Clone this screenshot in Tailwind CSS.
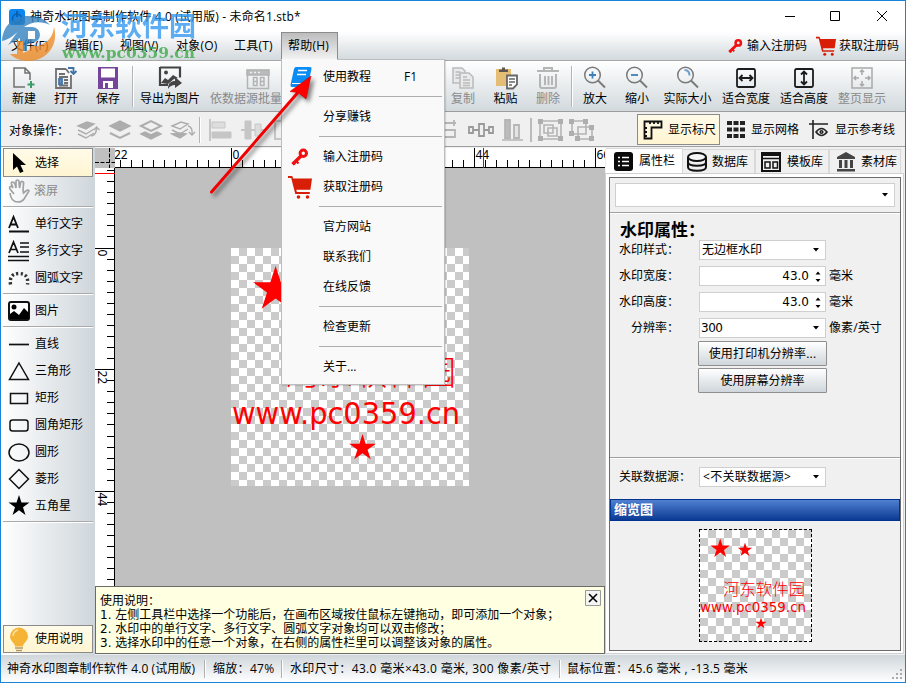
<!DOCTYPE html>
<html lang="zh-CN">
<head>
    <meta charset="UTF-8">
    <meta name="viewport" content="width=device-width, initial-scale=1.0">
    <title>神奇水印图章制作软件 4.0 (试用版)</title>
    <script src="https://cdn.jsdelivr.net/npm/@tailwindcss/browser@4"></script>
</head>
<body class="overflow-hidden">
    <!-- shared symbols -->
    <svg class="hidden">
        <symbol id="star" viewBox="-10 -10 20 20"><path d="M0-10 2.25-3.09H9.51L3.63 1.18 5.88 8.09 0 3.82-5.88 8.09-3.63 1.18-9.51-3.09H-2.25Z"/></symbol>
        <symbol id="key" viewBox="0 0 18 18"><g fill="none" stroke="#f01010"><circle cx="12.300" cy="5.300" r="3.200" stroke-width="3"/><path d="M10 8 1.500 16.200" stroke-width="3.400"/><path d="m4.500 12.500 3 3M2 14.500l2 2" stroke-width="2.400"/></g></symbol>
        <symbol id="cart" viewBox="0 0 24 24"><path d="M0 1h4.200l1 2.500H24l-1.600 11.300H8.300l.5 2.200h13v2H7.300L3.200 3H0Z" fill="#d81e06"/><circle cx="10.500" cy="22" r="1.800" fill="#d81e06"/><circle cx="19.500" cy="22" r="1.800" fill="#d81e06"/></symbol>
        <symbol id="down" viewBox="0 0 6 4"><path d="M0 0h6L3 3.500Z"/></symbol>
        <symbol id="lens" viewBox="0 0 24 24"><circle cx="9.500" cy="9" r="7.800" fill="none" stroke="#7a7a7a" stroke-width="1.500"/><path d="m15 14.500 7 7" stroke="#7a7a7a" stroke-width="2"/></symbol>
    </svg>

    <div class="relative w-[906px] h-[683px] border border-[#1883d7] bg-[#f0f0f0] flex flex-col text-[12px] leading-[14px] text-black whitespace-nowrap font-['Open_Sans','Noto_Sans_CJK_SC',sans-serif]">
        <!-- title bar -->
        <div class="h-[31px] shrink-0 bg-white flex items-center pl-[8px]">
            <svg class="w-4 h-4" viewBox="0 0 16 16"><rect width="16" height="16" rx="3" fill="#0d87ee"/><circle cx="8" cy="9.500" r="4.500" fill="none" stroke="#0a5fae" stroke-width="1.600"/><path d="M8 2v6" stroke="#0a5fae" stroke-width="2"/></svg>
            <span class="ml-[5px] tracking-[0.14px]">神奇水印图章制作软件 4.0 (试用版) - 未命名1.stb*</span>
            <svg class="ml-auto mr-[17px] w-[104px] h-[12px] mb-[2px]" viewBox="0 0 104 12" fill="none" stroke="#000"><path d="M1 6.500h10M46.500 1.500h9v9h-9ZM93 1l10 10M103 1 93 11"/></svg>
        </div>

        <!-- menu bar -->
        <div class="h-[29px] shrink-0 border-b border-[#a8a8a8] bg-linear-to-b from-white to-[#d2d9dd] flex items-center">
            <span class="w-[54px] pl-[10px]">文件(F)</span>
            <span class="w-[55px] pl-[10px]">编辑(E)</span>
            <span class="w-[56px] pl-[10px]">视图(V)</span>
            <span class="w-[58px] pl-[10px] tracking-[0.2px]">对象(O)</span>
            <span class="w-[57px] pl-[10px] tracking-[0.2px]">工具(T)</span>
            <span class="w-[57px] h-full border border-b-0 border-[#8c8c8c] bg-linear-to-b from-[#bdbdbd] to-[#f4f4f4] pl-[6px] leading-[26px] tracking-[0.2px]">帮助(H)</span>
            <div class="ml-auto flex items-center mr-[6px]">
                <svg class="w-[15px] h-[16px] mr-[4px]"><use href="#key"/></svg>输入注册码
                <svg class="w-[20px] h-[20px] ml-[9px] mr-[3px]"><use href="#cart"/></svg>获取注册码
            </div>
        </div>

        <!-- main toolbar -->
        <div class="h-[51px] shrink-0 border-b border-[#9d9d9d] bg-linear-to-b from-white to-[#d2d9dd] flex pt-[5px] pl-[2px]">
            <div class="w-[42px] shrink-0 flex flex-col items-center gap-[2px]">
                <svg class="w-6 h-6" viewBox="0 0 24 24" fill="none" stroke="#707070" stroke-width="1.500"><path d="M13 21H2V2h11l5 5v7M13 2v5h5"/><path d="M19 15v7M15.500 18.500h7" stroke="#3d9b6a" stroke-width="2"/></svg>新建
            </div>
            <div class="w-[42px] shrink-0 flex flex-col items-center gap-[2px]">
                <svg class="w-6 h-6" viewBox="0 0 24 24" fill="none" stroke="#707070" stroke-width="1.800"><path d="M12 3H2v19h15V9M12 3l3 4"/><path d="M5 8h6M5 11h9M10 14h4M10 17h4M5 19.500h9"/><path d="M5 13h3v5H5Z" fill="#6f8fb0" stroke="#4678ab"/><path d="M14 2h5.500v5M16.500 5l3 3 3-3" stroke="#3f74a8"/></svg>打开
            </div>
            <div class="w-[42px] shrink-0 flex flex-col items-center gap-[2px]">
                <svg class="w-6 h-6" viewBox="0 0 24 24"><path d="M2 1h20v22H2Z" fill="#75459b"/><path d="M5 2.500h14v9H5ZM7 15h10v7H7Z" fill="#fff"/><path d="M9 17h3v5H9Z" fill="#75459b"/></svg>保存
            </div>
            <div class="w-[2px] shrink-0 h-[41px] mx-[3px] bg-[#b4b4b4] border-r border-white"></div>
            <div class="w-[64px] shrink-0 ml-px flex flex-col items-center gap-[2px]">
                <svg class="w-6 h-6" viewBox="0 0 24 24"><path d="M2 1.500h20v10M2 1v18h8" fill="none" stroke="#444" stroke-width="2.200"/><circle cx="8" cy="6.500" r="2" fill="#444"/><path d="m3 17 4-5 3 2 5-5 5 3-4 1-6 5Z" fill="#444"/><path d="M10 23c0-6 3-8 7-8v-4l7 6-7 5v-3c-3 0-5 1-7 4Z" fill="#444"/></svg>导出为图片
            </div>
            <div class="w-[112px] shrink-0 flex flex-col items-center gap-[2px] text-[#8a8a8a]">
                <svg class="w-6 h-6" viewBox="0 0 24 24" fill="none" stroke="#b3b3b3" stroke-width="1.500"><path d="M1.500 4.500h21v18h-21Z"/><path d="M1 4h22v5H1Z" fill="#bbb"/><path d="M4 6.500h2m2 0h2m2 0h2" stroke="#eee"/><path d="M7.500 11.500h3.500v8H7.500Zm0 4H11M14.500 11.500H18v8h-3.500Zm0 4H18"/></svg>依数据源批量导出
            </div>
            <div class="w-[128px] shrink-0"></div>
            <div class="w-[42px] shrink-0 flex flex-col items-center gap-[2px] text-[#8a8a8a]">
                <svg class="w-6 h-6" viewBox="0 0 24 24" fill="#e8eaeb" stroke="#bbb" stroke-width="1.500"><path d="M2 2h9l3 3v12H2Z"/><path d="M4.500 6h5M4.500 9h5M4.500 12h5"/><path d="M9 7h9l4 4v11H9Z"/><path d="M12 11h4M12 14h7M12 17h7M12 19.500h7"/></svg>复制
            </div>
            <div class="w-[43px] shrink-0 flex flex-col items-center gap-[2px]">
                <svg class="w-6 h-6" viewBox="0 0 24 24"><path d="M2 3h15v17H2Z" fill="#e5bd75"/><path d="M5 6V3.500h3V1.500h3v2h3V6Z" fill="#5c5550"/><path d="M13 9.500h10v9l-4 4h-6Z" fill="#fff" stroke="#666" stroke-width="1.800"/><path d="M15 13h6M15 16h6M15 19h3" stroke="#666" stroke-width="1.400"/></svg>粘贴
            </div>
            <div class="w-[42px] shrink-0 flex flex-col items-center gap-[2px] text-[#8a8a8a]">
                <svg class="w-6 h-6" viewBox="0 0 24 24" fill="none" stroke="#b5b5b5" stroke-width="2"><path d="M1 5h22M8 5V2h8v3M4 8v12q0 2 2 2h12q2 0 2-2V8M9 10v9M12.500 10v9M16 10v9"/></svg>删除
            </div>
            <div class="w-[2px] shrink-0 h-[41px] ml-[2px] mr-px bg-[#b4b4b4] border-r border-white"></div>
            <div class="w-[42px] shrink-0 flex flex-col items-center gap-[2px]">
                <svg class="w-6 h-6" viewBox="0 0 24 24"><use href="#lens"/><path d="M6 9h7M9.500 5.500v7" stroke="#3f7fb8" stroke-width="1.800"/></svg>放大
            </div>
            <div class="w-[42px] shrink-0 flex flex-col items-center gap-[2px]">
                <svg class="w-6 h-6" viewBox="0 0 24 24"><use href="#lens"/><path d="M6 9h7" stroke="#3f7fb8" stroke-width="1.800"/></svg>缩小
            </div>
            <div class="w-[59px] shrink-0 flex flex-col items-center gap-[2px]">
                <svg class="w-6 h-6" viewBox="0 0 24 24"><use href="#lens"/><path d="M8.500 4q5 .3 5 5.500" fill="none" stroke="#6ba0cc" stroke-width="2"/></svg>实际大小
            </div>
            <div class="w-[58px] shrink-0 flex flex-col items-center gap-[2px]">
                <svg class="w-6 h-6" viewBox="0 0 24 24" fill="none" stroke="#1c1c1c" stroke-width="1.800"><rect x="3" y="3" width="18" height="18" rx="1.500"/><path d="M6 12h12M8.500 9l-3 3 3 3M15.500 9l3 3-3 3"/></svg>适合宽度
            </div>
            <div class="w-[58px] shrink-0 flex flex-col items-center gap-[2px]">
                <svg class="w-6 h-6" viewBox="0 0 24 24" fill="none" stroke="#1c1c1c" stroke-width="1.800"><rect x="3" y="3" width="18" height="18" rx="1.500"/><path d="M12 6v12M9 8.500l3-3 3 3M9 15.500l3 3 3-3"/></svg>适合高度
            </div>
            <div class="w-[58px] shrink-0 flex flex-col items-center gap-[2px] text-[#8a8a8a]">
                <svg class="w-6 h-6" viewBox="0 0 24 24" fill="none" stroke="#a9a9a9" stroke-width="1.500"><path d="M2 2h20v20H2Z"/><path d="M12 4v5M12 15v5M4 12h5M15 12h5M10 6l2-2 2 2M10 18l2 2 2-2M6 10l-2 2 2 2M18 10l2 2-2 2"/></svg>整页显示
            </div>
        </div>

        <!-- object toolbar -->
        <div class="h-[35px] shrink-0 border-b border-[#a0a0a0] flex items-center pl-[8px] pt-[2px]">
            <span class="w-[67px] pt-[2px]">对象操作：</span>
            <svg class="w-[121px] h-6" viewBox="0 0 121 24" fill="#adadad" stroke="#adadad" stroke-width="1.400">
                <path d="m2 8 9-4 7 2-8 5Z"/><path d="m2 12 8 4 8-5M2 16l8 4 8-5" fill="none"/><path d="M15 18q6-1 5.500-9M18 12l2.500-3 3 3" fill="none"/>
                <path d="m34 8 10-5 10 5-10 5Z"/><path d="m34 15 10 5 10-5" fill="none" stroke-width="2"/>
                <path d="m65 8 10-5 10 5-10 5Z" fill="none" stroke-width="2"/><path d="m65 16 4-2 6 3 6-3 4 2-10 5Z"/>
                <path d="m96 8 9-4 7 2-8 5Z" fill="none"/><path d="m96 12 8 4 8-5" fill="none"/><path d="m96 16 8 4 6-4-7-1Z"/><path d="M112 8q5 1 4 9m-3-3 3 3 3-3" fill="none"/>
            </svg>
            <div class="w-[2px] h-[26px] ml-[2px] bg-[#b4b4b4] border-r border-white"></div>
            <svg class="w-[90px] h-6 ml-[8px]" viewBox="0 0 90 24" fill="#c6c6c6" stroke="#c6c6c6"><path d="M1 1v22" stroke-width="2"/><path d="M3 4h13v6H3Z" fill="#ddd"/><path d="M3 14h19v6H3Z"/><path d="M32 12h23" stroke-width="2"/><path d="M36 3h6v18h-6Z"/><path d="M46 6h6v12h-6Z" fill="#ddd"/><path d="M66 3h20v18H66Z" fill="none" stroke-width="2"/></svg>
            <div class="w-[128px]"></div>
            <svg class="w-[95px] h-6 ml-[8px]" viewBox="0 0 95 24" fill="none" stroke="#b5b5b5" stroke-width="1.800"><path d="M3 5h18M19 2v6M3 12h17v7H3Z"/><g stroke="#9a9a9a"><path d="M34 9h4v6h-4ZM44 6h5v12h-5ZM54 9h4v6h-4ZM38 12h6M49 12h5"/></g><path d="M67 22h21" stroke-width="1.500"/><path d="M70 2h5v18h-5Z" fill="#bbb"/><path d="M79 7h5v13h-5Z" fill="#e4e4e4"/></svg>
            <svg class="w-[64px] h-6 ml-0" viewBox="0 0 64 24"><path d="M1 0v24" stroke="#aaa" stroke-width="1.500"/><g fill="none" stroke="#b4b4b4" stroke-width="1.600"><path d="M10 3h21v18H10ZM14 7h9v8h-9ZM18 10h9v8h-9Z"/><path d="M42 3h14v13H42ZM48 9h14v12H48Z"/></g><g fill="#aeaeae"><path d="M8 1h5v5H8zM28 1h5v5h-5zM8 18h5v5H8zM28 18h5v5h-5zM39 1h5v5h-5zM53 1h5v5h-5zM39 13h5v5h-5zM45 18h5v5h-5zM59 18h5v5h-5zM59 7h5v5h-5z"/></g></svg>
            <div class="ml-auto w-[83px] h-[31px] mt-[-1px] border border-[#8b8b8b] bg-linear-to-b from-[#fffbe9] to-[#fff5d2] flex items-center pl-[5px]">
                <svg class="w-[20px] h-[20px] mr-[5px]" viewBox="0 0 20 20" fill="none" stroke="#111" stroke-width="1.800"><path d="M1.500 1.500h17v6h-10v11h-7ZM7 1v3M11 1v3M15 1v3M1 8h3M1 12h3M1 16h3"/></svg>显示标尺
            </div>
            <svg class="w-[18px] h-[18px] ml-[7px] mr-[6px]" viewBox="0 0 18 18"><path d="M0 0h5v4H0zM6.500 0h5v4h-5zM13 0h5v4h-5zM0 6.500h5v4H0zM6.500 6.500h5v4h-5zM13 6.500h5v4h-5zM0 13h5v4H0zM6.500 13h5v4h-5zM13 13h5v4h-5z" fill="#222"/></svg>显示网格
            <svg class="w-[20px] h-[20px] ml-[10px] mr-[6px]" viewBox="0 0 20 20" fill="none" stroke="#222" stroke-width="1.600"><path d="M0 4h19M4 0v19M7 12q5.500-7 11 0-5.500 7-11 0Z"/><circle cx="12.500" cy="12" r="1.300"/></svg><span class="mr-[10px]">显示参考线</span>
        </div>

        <div class="h-[508px] shrink-0 flex">
            <!-- tool palette -->
            <div class="w-[94px] pl-[2px] pt-[1px] flex flex-col bg-linear-to-r from-white to-[#cfd6db]">
                <div class="w-[90px] h-[29px] border border-[#8b8b8b] bg-linear-to-b from-[#fffbe9] to-[#fff5d2] flex items-center pl-[4px] gap-[5px]">
                    <svg class="w-[22px] h-[22px]" viewBox="0 0 22 22"><path d="M5 1v17l4-3.500 3 6.500 3.500-1.500-3-6.500H18Z"/></svg>选择
                </div>
                <div class="h-[27px] flex items-center pl-[5px] gap-[4px] text-[#8a8a8a]">
                    <svg class="w-[22px] h-[24px]" viewBox="0 0 22 24" fill="none" stroke="#a2a2a2" stroke-width="1.700"><path d="M6 15 2 10q-1-2 .5-2.500T5 9L3.500 5Q3 3 4.500 3T7 5l1 4V3q0-2 1.500-2T11 3l.5 6 1-5q.500-2 2-1.500T15.500 5L15 11l.5 3 3-2.500q2-1 2.500.5l-5 8q-2 3-6 3-7 0-8-9"/></svg>滚屏
                </div>
                <div class="h-[6px] pt-[2px]"><div class="h-[2px] w-[90px] bg-[#a9a9a9] border-b border-white"></div></div>
                <div class="h-[27px] flex items-center pl-[5px] gap-[5px]">
                    <svg class="w-[22px] h-[22px]" viewBox="0 0 22 22" fill="none" stroke="#111" stroke-width="1.800"><path d="M1 15 5.500 4 10 15M2.500 11.500h6M1 18.500h20"/></svg>单行文字
                </div>
                <div class="h-[27px] flex items-center pl-[5px] gap-[5px]">
                    <svg class="w-[22px] h-[22px]" viewBox="0 0 22 22" fill="none" stroke="#111" stroke-width="1.700"><path d="M1 13 5.500 2 10 13M2.500 9.500h6M12 3h9M12 7h9M12 12h9M0 16.500h21M0 20.500h21"/></svg>多行文字
                </div>
                <div class="h-[27px] flex items-center pl-[5px] gap-[5px]">
                    <svg class="w-[22px] h-[22px]" viewBox="0 0 22 22" fill="none" stroke="#333" stroke-width="3.400" stroke-dasharray="2.200 2.300"><path d="M2.500 17.500Q1 6.500 11 6.500t8.500 11"/></svg>圆弧文字
                </div>
                <div class="h-[6px] pt-[2px]"><div class="h-[2px] w-[90px] bg-[#a9a9a9] border-b border-white"></div></div>
                <div class="h-[27px] flex items-center pl-[5px] gap-[5px]">
                    <svg class="w-[22px] h-[22px]" viewBox="0 0 22 22"><rect x="1" y="2" width="20" height="18" rx="2" fill="#fff" stroke="#111" stroke-width="2"/><circle cx="6" cy="7" r="2.500"/><path d="M2 19v-5l4-3 5 4 5-7 5 5v6Z"/></svg>图片
                </div>
                <div class="h-[6px] pt-[2px]"><div class="h-[2px] w-[90px] bg-[#a9a9a9] border-b border-white"></div></div>
                <div class="h-[27px] flex items-center pl-[5px] gap-[5px]">
                    <svg class="w-[22px] h-[22px]" viewBox="0 0 22 22" fill="none" stroke="#111" stroke-width="1.700"><path d="M1 11.500h20"/></svg>直线
                </div>
                <div class="h-[27px] flex items-center pl-[5px] gap-[5px]">
                    <svg class="w-[22px] h-[22px]" viewBox="0 0 22 22" fill="none" stroke="#111" stroke-width="1.500"><path d="M11 3 20.500 19.500h-19Z"/></svg>三角形
                </div>
                <div class="h-[27px] flex items-center pl-[5px] gap-[5px]">
                    <svg class="w-[22px] h-[22px]" viewBox="0 0 22 22" fill="none" stroke="#111" stroke-width="1.500"><path d="M2.500 6.500h17v10h-17Z"/></svg>矩形
                </div>
                <div class="h-[27px] flex items-center pl-[5px] gap-[5px]">
                    <svg class="w-[22px] h-[22px]" viewBox="0 0 22 22" fill="none" stroke="#111" stroke-width="1.500"><rect x="2" y="6" width="18" height="11" rx="2.500"/></svg>圆角矩形
                </div>
                <div class="h-[27px] flex items-center pl-[5px] gap-[5px]">
                    <svg class="w-[22px] h-[22px]" viewBox="0 0 22 22" fill="none" stroke="#111" stroke-width="1.500"><ellipse cx="11" cy="11.500" rx="10" ry="8.500"/></svg>圆形
                </div>
                <div class="h-[27px] flex items-center pl-[5px] gap-[5px]">
                    <svg class="w-[22px] h-[22px]" viewBox="0 0 22 22" fill="none" stroke="#111" stroke-width="1.500"><path d="m11 1.500 9.500 9.500-9.500 9.500L1.500 11Z"/></svg>菱形
                </div>
                <div class="h-[27px] flex items-center pl-[5px] gap-[5px]">
                    <svg class="w-[22px] h-[22px]"><use href="#star"/></svg>五角星
                </div>
                <div class="h-[6px] pt-[2px]"><div class="h-[2px] w-[90px] bg-[#a9a9a9] border-b border-white"></div></div>
                <div class="w-[90px] h-[28px] mt-auto mb-[2px] border border-[#8b8b8b] bg-linear-to-b from-[#fffbe9] to-[#fff5d2] flex items-center pl-[5px] gap-[6px]">
                    <svg class="w-[20px] h-[25px]" viewBox="0 0 20 25"><path d="M10 .5a9 9 0 0 0-9 9c0 5 5 6 5 10h8c0-4 5-5 5-10a9 9 0 0 0-9-9Z" fill="#f6b436"/><path d="M4 9q.5-5 5-6" fill="none" stroke="#fde2a5" stroke-width="1.500"/><path d="M6 21h8M7 23.500h6" stroke="#b49a6a" stroke-width="1.500"/></svg>使用说明
                </div>
            </div>

            <!-- rulers, canvas and hint box -->
            <div class="w-[510px] pt-[1px] flex flex-col">
                <div class="h-[20px] flex">
                    <svg class="w-[20px] h-[20px] bg-[#c0c0c0]" viewBox="0 0 20 20"><path d="M14.500 0v20M0 14.500h20" stroke="#000" stroke-dasharray="4 1.500"/></svg>
                    <svg id="rulerX" class="w-[490px] h-[20px] bg-white" viewBox="115 148 490 20"></svg>
                </div>
                <div class="h-[418px] flex">
                    <svg id="rulerY" class="w-[20px] h-[418px] bg-white" viewBox="95 168 20 418"></svg>
                    <div class="w-[490px] h-[418px] bg-[#c0c0c0] pl-[116px] pt-[80px]">
                        <div class="w-[238px] h-[238px] bg-[conic-gradient(#cbcbcb_25%,#fff_0_50%,#cbcbcb_0_75%,#fff_0)] bg-size-[16px_16px]">
                            <svg class="w-[238px] h-[238px]" viewBox="231 248 238 238" fill="#f00">
                                <use href="#star" x="252" y="266" width="47.200" height="47.200"/>
                                <use href="#star" x="348.500" y="434" width="28" height="28"/>
                                <text x="285" y="385" font-size="34" textLength="171" font-family="'Noto Sans CJK SC'" font-weight="300">河东软件园</text>
                                <text x="232" y="423.500" font-size="30.500" textLength="228" lengthAdjust="spacingAndGlyphs" font-family="'DejaVu Sans'">www.pc0359.cn</text>
                            </svg>
                        </div>
                    </div>
                </div>
                <div class="h-[68px] border border-[#6b6b6b] bg-[#ffffe1] flex justify-between pl-[4px] pt-[7px] pr-[3px]">
                    <div class="font-['DejaVu_Sans','Noto_Sans_CJK_SC',sans-serif]">
                        <p>使用说明：</p>
                        <p>1. 左侧工具栏中选择一个功能后，在画布区域按住鼠标左键拖动，即可添加一个对象；</p>
                        <p>2. 水印中的单行文字、多行文字、圆弧文字对象均可以双击修改；</p>
                        <p>3. 选择水印中的任意一个对象，在右侧的属性栏里可以调整该对象的属性。</p>
                    </div>
                    <svg class="w-[16px] h-[16px] mt-[-4px]" viewBox="0 0 16 16"><path d="M.5.5h15v15H.5Z" fill="#f4f4f4" stroke="#999"/><path d="m4 4 8 8M12 4l-8 8" stroke="#000" stroke-width="1.600"/></svg>
                </div>
            </div>

            <!-- property panel -->
            <div class="w-[299px] pt-[1px] flex flex-col">
                <div class="h-[25px] flex items-end bg-[#f0f0f0] pl-[1px]">
                    <div class="w-[76px] h-[25px] bg-white border-t border-[#d9d9d9] flex items-center pl-[8px] gap-[6px]">
                        <svg class="w-[19px] h-[19px]" viewBox="0 0 19 19"><rect width="19" height="19" rx="3" fill="#0a0a0a"/><path d="M4 5.500h2m2 0h7M4 9.500h2m2 0h7M4 13.500h2m2 0h7" stroke="#fff" stroke-width="1.700"/></svg>属性栏
                    </div>
                    <div class="w-[73px] h-[24px] border border-b-0 border-[#d9d9d9] flex items-center pt-px pl-[4px] gap-[5px]">
                        <svg class="w-[20px] h-[20px]" viewBox="0 0 20 20" fill="none" stroke="#111" stroke-width="2"><ellipse cx="10" cy="5" rx="9" ry="4" fill="#f6f6f6"/><path d="M1 5v10c0 5 18 5 18 0V5M1 10c0 5 18 5 18 0"/></svg>数据库
                    </div>
                    <div class="w-[74px] h-[24px] border border-b-0 border-[#d9d9d9] flex items-center pt-px pl-[5px] gap-[6px]">
                        <svg class="w-[20px] h-[20px]" viewBox="0 0 20 20" fill="none" stroke="#111" stroke-width="2"><path d="M1 1h18v18H1ZM1 3h18"/><path d="M1 6.500h18" stroke-width="1.500"/><path d="M4 10h5v6H4ZM12 10h4.500v6H12Z" stroke-width="1.500"/></svg>模板库
                    </div>
                    <div class="w-[72px] h-[24px] border border-b-0 border-[#d9d9d9] flex items-center pt-px pl-[6px] gap-[5px]">
                        <svg class="w-[20px] h-[20px]" viewBox="0 0 20 20" fill="#444"><path d="m10 0 9 5v2H1V5ZM3 8h3v8H3zM8.500 8h3v8h-3zM14 8h3v8h-3zM1 17h18v2.500H1z"/></svg>素材库
                    </div>
                </div>
                <div class="h-[481px] border border-[#d0d0d0] bg-white p-[3px]">
                    <div class="w-[292px] h-[474px] border border-[#6b6b6b] bg-[#f0f0f0] flex flex-col">
                        <div class="h-[34px] px-[5px] pt-[5px]">
                            <div class="h-[24px] border border-[#cfcfcf] bg-white flex items-center justify-end pr-[6px]"><svg class="w-[6px] h-[4px]"><use href="#down"/></svg></div>
                        </div>
                        <div class="h-[2px] bg-[#a0a0a0] border-b border-white"></div>
                        <div class="h-[23px] pl-[10px] pt-[7px] text-[17px] leading-[17px] font-bold">水印属性：</div>
                        <div class="h-[26px] flex items-center pl-[9px]"><span class="w-[80px]">水印样式：</span>
                            <div class="w-[127px] h-[20px] border border-[#cfcfcf] bg-white flex items-center justify-between pl-[2px] pr-[6px]">无边框水印<svg class="w-[6px] h-[4px]"><use href="#down"/></svg></div>
                        </div>
                        <div class="h-[26px] flex items-center pl-[9px]"><span class="w-[80px]">水印宽度：</span>
                            <div class="w-[127px] h-[20px] mr-[3px] border border-[#cfcfcf] bg-white flex items-center justify-end pr-[4px] gap-[6px] font-['DejaVu_Sans']">43.0<svg class="w-[6px] h-[11px]" viewBox="0 0 6 11"><path d="M.5 3.500 3 .5l2.500 3ZM.5 8 3 11l2.500-3Z"/></svg></div>毫米
                        </div>
                        <div class="h-[26px] flex items-center pl-[9px]"><span class="w-[80px]">水印高度：</span>
                            <div class="w-[127px] h-[20px] mr-[3px] border border-[#cfcfcf] bg-white flex items-center justify-end pr-[4px] gap-[6px] font-['DejaVu_Sans']">43.0<svg class="w-[6px] h-[11px]" viewBox="0 0 6 11"><path d="M.5 3.500 3 .5l2.500 3ZM.5 8 3 11l2.500-3Z"/></svg></div>毫米
                        </div>
                        <div class="h-[26px] flex items-center pl-[21px]"><span class="w-[68px]">分辨率：</span>
                            <div class="w-[127px] h-[20px] mr-[3px] border border-[#cfcfcf] bg-white flex items-center justify-between pl-[1px] pr-[6px] font-['DejaVu_Sans'] tracking-[-0.5px]">300<svg class="w-[6px] h-[4px]"><use href="#down"/></svg></div><span class="tracking-[0.1px]">像素/英寸</span>
                        </div>
                        <div class="w-[129px] h-[25px] ml-[88px] mb-[2px] border border-[#8f8f8f] rounded-[1px] bg-linear-to-b from-white to-[#cfd6db] flex items-center justify-center tracking-[0.2px]">使用打印机分辨率...</div>
                        <div class="w-[129px] h-[25px] ml-[88px] border border-[#8f8f8f] rounded-[1px] bg-linear-to-b from-white to-[#cfd6db] flex items-center justify-center">使用屏幕分辨率</div>
                        <div class="h-[2px] mt-[64px] bg-[#a0a0a0] border-b border-white"></div>
                        <div class="h-[40px] pb-[4px] flex items-center pl-[9px]"><span class="w-[80px]">关联数据源：</span>
                            <div class="w-[127px] h-[20px] border border-[#cfcfcf] bg-white flex items-center justify-between pl-[3px] pr-[6px] tracking-[0.3px]">&lt;不关联数据源&gt;<svg class="w-[6px] h-[4px]"><use href="#down"/></svg></div>
                        </div>
                        <div class="h-[22px] border border-[#00338f] bg-linear-to-b from-[#5080d0] to-[#0a3a94] text-white font-bold text-[13px] leading-[19px] pl-[3px]">缩览图</div>
                        <div class="w-[113px] h-[113px] mt-[8px] ml-[89px] border border-dashed border-black bg-white bg-[conic-gradient(#cbcbcb_25%,#fff_0_50%,#cbcbcb_0_75%,#fff_0)] bg-size-[16px_16px]">
                            <svg class="w-[111px] h-[111px]" viewBox="700 530 111 111" fill="#f00">
                                <use href="#star" x="710" y="538.500" width="20.400" height="20.400"/>
                                <use href="#star" x="737.500" y="542.500" width="15" height="15"/>
                                <use href="#star" x="755" y="617.500" width="12" height="12"/>
                                <text x="723" y="594.500" font-size="16.300" textLength="82" font-family="'Noto Sans CJK SC'" font-weight="300">河东软件园</text>
                                <text x="700" y="611.500" font-size="14.500" textLength="106" lengthAdjust="spacingAndGlyphs" font-family="'DejaVu Sans'">www.pc0359.cn</text>
                            </svg>
                        </div>
                    </div>
                </div>
            </div>
        </div>

        <!-- status bar -->
        <div class="h-[27px] shrink-0 bg-linear-to-b from-[#cfd6db] to-white flex items-center pl-[6px]">
            <span class="w-[197px] tracking-[0.1px]">神奇水印图章制作软件 4.0 (试用版)</span>
            <div class="w-[2px] h-[18px] bg-[#b0b0b0] border-r border-white"></div>
            <span class="w-[75px] pl-[7px] tracking-[0.3px]">缩放：47%</span>
            <div class="w-[2px] h-[18px] bg-[#b0b0b0] border-r border-white"></div>
            <span class="w-[276px] pl-[7px] tracking-[0.34px]">水印尺寸：43.0 毫米×43.0 毫米, 300 像素/英寸</span>
            <div class="w-[2px] h-[18px] bg-[#b0b0b0] border-r border-white"></div>
            <span class="pl-[6px] tracking-[0.27px]">鼠标位置：45.6 毫米 , -13.5 毫米</span>
            <svg class="w-[11px] h-[11px] ml-auto mr-[2px] self-end mb-[2px]" viewBox="0 0 11 11"><path d="M8 0h2v2H8zM4 4h2v2H4zM8 4h2v2H8zM0 8h2v2H0zM4 8h2v2H4zM8 8h2v2H8z" fill="#aaa"/></svg>
        </div>

        <!-- help menu -->
        <div class="absolute left-[280px] top-[58px] w-[164px] h-[326px] border border-[#bdbdbd] bg-[#f9f9f9] pt-[2px] shadow-[1px_1px_1px_rgba(0,0,0,0.12)]">
            <div class="absolute left-0 top-[-1px] w-[55px] h-px bg-[#f9f9f9]"></div>
            <div class="h-[30px] flex items-center"><svg class="w-[24px] h-[24px] ml-[7px] mr-[10px]" viewBox="0 0 24 24"><path d="M7 2h14q2 0 1.500 2L19 20q-.5 2-2.500 2H3q-2 0-1.500-2L5 4q.500-2 2-2Z" fill="#0a8cf5"/><path d="M9 5.500h9M8 9.500h9" stroke="#fff" stroke-width="1.600"/><path d="M3 18.500h15" stroke="#fff"/></svg><span class="w-[81px]">使用教程</span>F1</div>
            <div class="h-[10px] ml-[37px] mr-[2px] pt-[4px]"><div class="h-px bg-[#adadad]"></div></div>
            <div class="h-[30px] flex items-center pl-[41px]">分享赚钱</div>
            <div class="h-[10px] ml-[37px] mr-[2px] pt-[4px]"><div class="h-px bg-[#adadad]"></div></div>
            <div class="h-[30px] flex items-center"><svg class="w-[18px] h-[18px] ml-[9px] mr-[14px]"><use href="#key"/></svg>输入注册码</div>
            <div class="h-[30px] flex items-center"><svg class="w-[24px] h-[24px] ml-[6px] mr-[11px]"><use href="#cart"/></svg>获取注册码</div>
            <div class="h-[10px] ml-[37px] mr-[2px] pt-[4px]"><div class="h-px bg-[#adadad]"></div></div>
            <div class="h-[30px] flex items-center pl-[41px]">官方网站</div>
            <div class="h-[30px] flex items-center pl-[41px]">联系我们</div>
            <div class="h-[30px] flex items-center pl-[41px]">在线反馈</div>
            <div class="h-[10px] ml-[37px] mr-[2px] pt-[4px]"><div class="h-px bg-[#adadad]"></div></div>
            <div class="h-[30px] flex items-center pl-[41px]">检查更新</div>
            <div class="h-[10px] ml-[37px] mr-[2px] pt-[4px]"><div class="h-px bg-[#adadad]"></div></div>
            <div class="h-[30px] flex items-center pl-[41px]">关于...</div>
        </div>

        <!-- site badge and pointer arrow -->
        <svg class="absolute left-[-1px] top-[-1px] w-[340px] h-[210px] pointer-events-none" viewBox="0 0 340 210">
            <g opacity=".78">
                <path d="M2 41C3 25 14 16 28 16c10 0 17 3 22 9-8-4-18-4-26 2C17 32 10 40 2 41Z" fill="#2f7fbe"/>
                <path d="M21 27h11c9 0 11 12 3 15l-8 2v7h-7V38l-12 7Z" fill="#2f7fbe"/>
                <path d="M54 27c5 18-7 34-26 34-8 0-14-3-18-7h7V41h6v12c4-2 8-3 8-7h6c10-2 16-9 17-19Z" fill="#f08a24"/>
                <path d="M28 31h7v8h-7Z" fill="#fff"/>
                <text x="61" y="35.500" font-size="27" textLength="135" font-family="'Noto Sans CJK SC'" font-weight="700" fill="#2f97f0">河东软件园</text>
                <text x="62" y="58" font-size="15.500" textLength="133" lengthAdjust="spacingAndGlyphs" font-family="'DejaVu Serif'" font-weight="700" fill="#3aa843">www.pc0359.cn</text>
            </g>
            <g class="drop-shadow-[3px_3px_2px_rgba(0,0,0,0.5)]">
                <path d="m211.500 192 86-99" stroke="#f00000" stroke-width="3" stroke-linecap="round"/>
                <path d="m311 76-21 15.500 8 1 8 6.500Z" fill="#f00" stroke="#d00000" stroke-width=".6"/>
            </g>
        </svg>
    </div>

    <script>
        // one tick is 2 mm, every 11th tick carries a label
        const STEP = 11.06;
        const rulerX = document.getElementById('rulerX');
        const rulerY = document.getElementById('rulerY');
        const font = 'font-family="Noto Sans" font-size="12"';

        let x = '<path d="M115 167.5h490" stroke="#000"/>';
        let y = '<path d="M114.5 168v418" stroke="#000"/>';
        for (let i = -11; i <= 34; i++) {
            const major = i % 11 === 0;
            const px = Math.floor(231 + i * STEP) + 0.5;
            const py = Math.floor(248 + i * STEP) + 0.5;
            x += `<path d="M${px} ${major ? 148 : 160}V168" stroke="#000"/>`;
            y += `<path d="M${major ? 95 : 107} ${py}H115" stroke="#000"/>`;
            if (major) {
                const label = Math.abs(i * 2);
                x += `<text x="${i < 0 ? 114 : px + 1}" y="159" ${font}>${label}</text>`;
                y += `<text transform="translate(98 ${py + 1}) rotate(90)" ${font}>${label}</text>`;
            }
        }
        rulerX.innerHTML = x + '<path d="M483.5 148v20" stroke="#e00000"/>';
        rulerY.innerHTML = y + '<path d="M95 173.500h20" stroke="#f00"/>';
    </script>
</body>
</html>
